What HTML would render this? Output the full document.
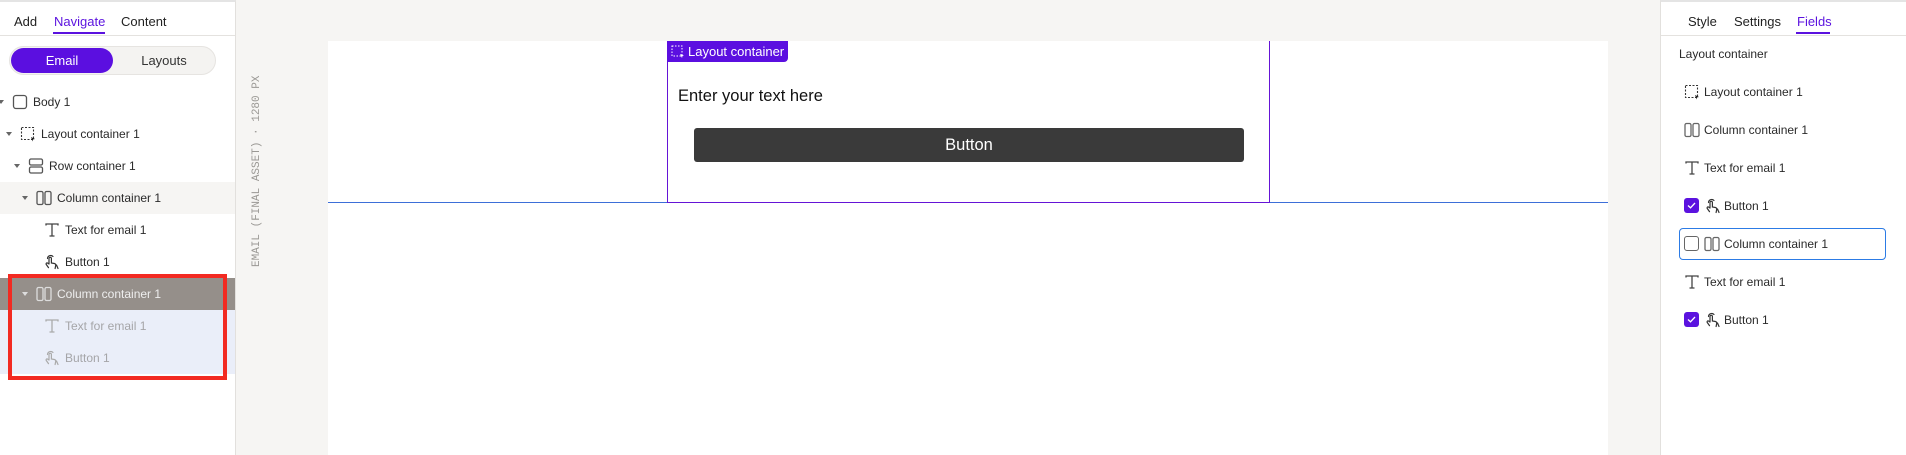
<!DOCTYPE html>
<html><head><meta charset="utf-8"><style>
*{margin:0;padding:0;box-sizing:border-box}
body{width:1906px;height:455px;overflow:hidden;background:#f6f5f3;font-family:"Liberation Sans",sans-serif;position:relative;color:#222}
.abs{position:absolute}
#left{left:0;top:0;width:236px;height:455px;background:#fff;border-right:1px solid #e2e0dd;border-top:2px solid #e4e4e4}
#right{left:1660px;top:0;width:246px;height:455px;background:#fff;border-left:1px solid #e2e0dd;border-top:2px solid #e4e4e4}
.tab{position:absolute;top:12px;font-size:13px;color:#222}
.tab.on{color:#5b12df}
.uline{position:absolute;top:30px;height:2px;background:#5b12df}
.hline{position:absolute;top:33px;left:0;right:0;height:1px;background:#e4e2df}
.row{position:absolute;left:0;width:235px;height:32px;font-size:12px;line-height:32px;color:#2a2a2a}
.row svg{position:absolute;top:8px}
.arr{position:absolute;top:14px;width:0;height:0;border-left:3px solid transparent;border-right:3px solid transparent;border-top:4px solid #666}
.rrow{position:absolute;left:18px;width:207px;height:32px;font-size:12px;line-height:32px;color:#2a2a2a}
.rrow svg{position:absolute;top:8px}
.cb{position:absolute;top:8px;width:15px;height:15px;border-radius:3px;background:#5b12df}
</style></head><body>
<svg width="0" height="0" style="position:absolute">
<defs>
<g id="i-body"><rect x="1.5" y="1.5" width="13" height="13" rx="2.5" fill="none" stroke="#555" stroke-width="1.3"/></g>
<g id="i-lay"><rect x="1.5" y="1.5" width="12" height="12" fill="none" stroke="#333" stroke-width="1.1" stroke-dasharray="2 1.5"/><path d="M11 11 L15 13 L13 13.5 L12.5 15.5Z" fill="#222"/></g>
<g id="i-row"><rect x="1.5" y="1" width="13" height="6" rx="1.5" fill="none" stroke="#555" stroke-width="1.3"/><rect x="1.5" y="9" width="13" height="6" rx="1.5" fill="none" stroke="#555" stroke-width="1.3"/></g>
<g id="i-col"><rect x="1" y="1.5" width="6" height="13" rx="1.5" fill="none" stroke-width="1.3"/><rect x="9" y="1.5" width="6" height="13" rx="1.5" fill="none" stroke-width="1.3"/></g>
<g id="i-txt"><path d="M2 3.5V2h12v1.5M8 2v12M5.5 14h5" fill="none" stroke-width="1.3"/></g>
<g id="i-btn"><path d="M5 10V4.5a1.2 1.2 0 0 1 2.4 0V9l3 .5c1 .2 1.5 1 1.3 2l-.6 3M5 10l-1.5-1a1 1 0 0 0-1.3 1.4l2.3 3.2M3.5 4.5a3.2 3.2 0 0 1 5.5-2M12.5 11l1.5 3.5" fill="none" stroke-width="1.2" stroke-linecap="round"/></g>
</defs></svg>

<div id="left" class="abs">
  <div class="tab" style="left:14px">Add</div>
  <div class="tab on" style="left:54px">Navigate</div>
  <div class="tab" style="left:121px">Content</div>
  <div class="uline" style="left:53px;width:52px"></div>
  <div class="hline"></div>
  <div class="abs" style="left:9px;top:44px;width:207px;height:29px;border-radius:15px;background:#f4f3f1;border:1px solid #e6e4e1"></div>
  <div class="abs" style="left:11px;top:46px;width:102px;height:25px;border-radius:13px;background:#5b0fe0;color:#fff;font-size:13px;line-height:25px;text-align:center">Email</div>
  <div class="abs" style="left:113px;top:46px;width:102px;height:25px;font-size:13px;line-height:25px;text-align:center;color:#333">Layouts</div>

  <div class="row" style="top:84px"><span class="arr" style="left:-2px"></span><svg width="16" height="16" style="left:12px"><use href="#i-body"/></svg><span style="position:absolute;left:33px">Body 1</span></div>
  <div class="row" style="top:116px"><span class="arr" style="left:6px"></span><svg width="16" height="16" style="left:20px"><use href="#i-lay"/></svg><span style="position:absolute;left:41px">Layout container 1</span></div>
  <div class="row" style="top:148px"><span class="arr" style="left:14px"></span><svg width="16" height="16" style="left:28px"><use href="#i-row"/></svg><span style="position:absolute;left:49px">Row container 1</span></div>
  <div class="row" style="top:180px;background:#f6f5f3"><span class="arr" style="left:22px"></span><svg width="16" height="16" style="left:36px;stroke:#555"><use href="#i-col"/></svg><span style="position:absolute;left:57px">Column container 1</span></div>
  <div class="row" style="top:212px"><svg width="16" height="16" style="left:44px;stroke:#444"><use href="#i-txt"/></svg><span style="position:absolute;left:65px">Text for email 1</span></div>
  <div class="row" style="top:244px"><svg width="16" height="16" style="left:44px;stroke:#333"><use href="#i-btn"/></svg><span style="position:absolute;left:65px">Button 1</span></div>
  <div class="row" style="top:276px;background:#958f8a;color:#eee"><span class="arr" style="left:22px;border-top-color:#ddd"></span><svg width="16" height="16" style="left:36px;stroke:#ddd"><use href="#i-col"/></svg><span style="position:absolute;left:57px">Column container 1</span></div>
  <div class="row" style="top:308px;background:#eaeef9;color:#a5a5a8"><svg width="16" height="16" style="left:44px;stroke:#aaa"><use href="#i-txt"/></svg><span style="position:absolute;left:65px">Text for email 1</span></div>
  <div class="row" style="top:340px;background:#eaeef9;color:#a5a5a8"><svg width="16" height="16" style="left:44px;stroke:#aaa"><use href="#i-btn"/></svg><span style="position:absolute;left:65px">Button 1</span></div>
  <div class="abs" style="left:8px;top:272px;width:219px;height:106px;border:4px solid #f22a22"></div>
</div>

<div class="abs" style="left:251px;top:267px;transform-origin:0 0;transform:rotate(-90deg);font-family:'Liberation Mono',monospace;font-size:11px;color:#9a9894;white-space:nowrap;width:200px">EMAIL (FINAL ASSET) · 1280 PX</div>

<div class="abs" style="left:328px;top:41px;width:1280px;height:414px;background:#fff"></div>
<div class="abs" style="left:328px;top:202px;width:1280px;height:1px;background:#3d6fd8"></div>
<div class="abs" style="left:667px;top:41px;width:603px;height:162px;border:1px solid #6514d6;border-top:none"></div>
<div class="abs" style="left:667px;top:41px;width:121px;height:21px;background:#5b0fe0;border-radius:0 0 4px 0;color:#fff;font-size:13px;line-height:21px;padding-left:21px;white-space:nowrap">Layout container</div>
<svg class="abs" width="14" height="14" style="left:671px;top:45px"><rect x="1" y="1" width="10" height="10" fill="none" stroke="#fff" stroke-dasharray="1.5 1.5"/><path d="M9 9l4 1.5-1.5.5-.5 2z" fill="#fff"/></svg>
<div class="abs" style="left:678px;top:87px;font-size:16.5px;color:#111">Enter your text here</div>
<div class="abs" style="left:694px;top:128px;width:550px;height:34px;background:#3a3a3a;border-radius:3px;color:#fff;font-size:16.5px;line-height:34px;text-align:center">Button</div>

<div id="right" class="abs">
  <div class="tab" style="left:27px">Style</div>
  <div class="tab" style="left:73px">Settings</div>
  <div class="tab on" style="left:136px">Fields</div>
  <div class="uline" style="left:135px;width:34px"></div>
  <div class="hline"></div>
  <div class="abs" style="left:18px;top:45px;font-size:12px;color:#2a2a2a">Layout container</div>
  <div class="rrow" style="top:74px"><svg width="16" height="16" style="left:5px"><use href="#i-lay"/></svg><span style="position:absolute;left:25px">Layout container 1</span></div>
  <div class="rrow" style="top:112px"><svg width="16" height="16" style="left:5px;stroke:#666"><use href="#i-col"/></svg><span style="position:absolute;left:25px">Column container 1</span></div>
  <div class="rrow" style="top:150px"><svg width="16" height="16" style="left:5px;stroke:#444"><use href="#i-txt"/></svg><span style="position:absolute;left:25px">Text for email 1</span></div>
  <div class="rrow" style="top:188px"><span class="cb" style="left:5px"><svg width="15" height="15" style="top:0;left:0"><path d="M4 7.5l2.5 2.3L11 5" fill="none" stroke="#fff" stroke-width="1.3"/></svg></span><svg width="16" height="16" style="left:26px;stroke:#333"><use href="#i-btn"/></svg><span style="position:absolute;left:45px">Button 1</span></div>
  <div class="rrow" style="top:226px;border:1px solid #2c7be5;border-radius:4px"><span class="abs" style="left:4px;top:7px;width:15px;height:15px;border:1px solid #666;border-radius:3px"></span><svg width="16" height="16" style="left:24px;top:7px;stroke:#666"><use href="#i-col"/></svg><span style="position:absolute;left:44px;top:-1px">Column container 1</span></div>
  <div class="rrow" style="top:264px"><svg width="16" height="16" style="left:5px;stroke:#444"><use href="#i-txt"/></svg><span style="position:absolute;left:25px">Text for email 1</span></div>
  <div class="rrow" style="top:302px"><span class="cb" style="left:5px"><svg width="15" height="15" style="top:0;left:0"><path d="M4 7.5l2.5 2.3L11 5" fill="none" stroke="#fff" stroke-width="1.3"/></svg></span><svg width="16" height="16" style="left:26px;stroke:#333"><use href="#i-btn"/></svg><span style="position:absolute;left:45px">Button 1</span></div>
</div>
</body></html>
